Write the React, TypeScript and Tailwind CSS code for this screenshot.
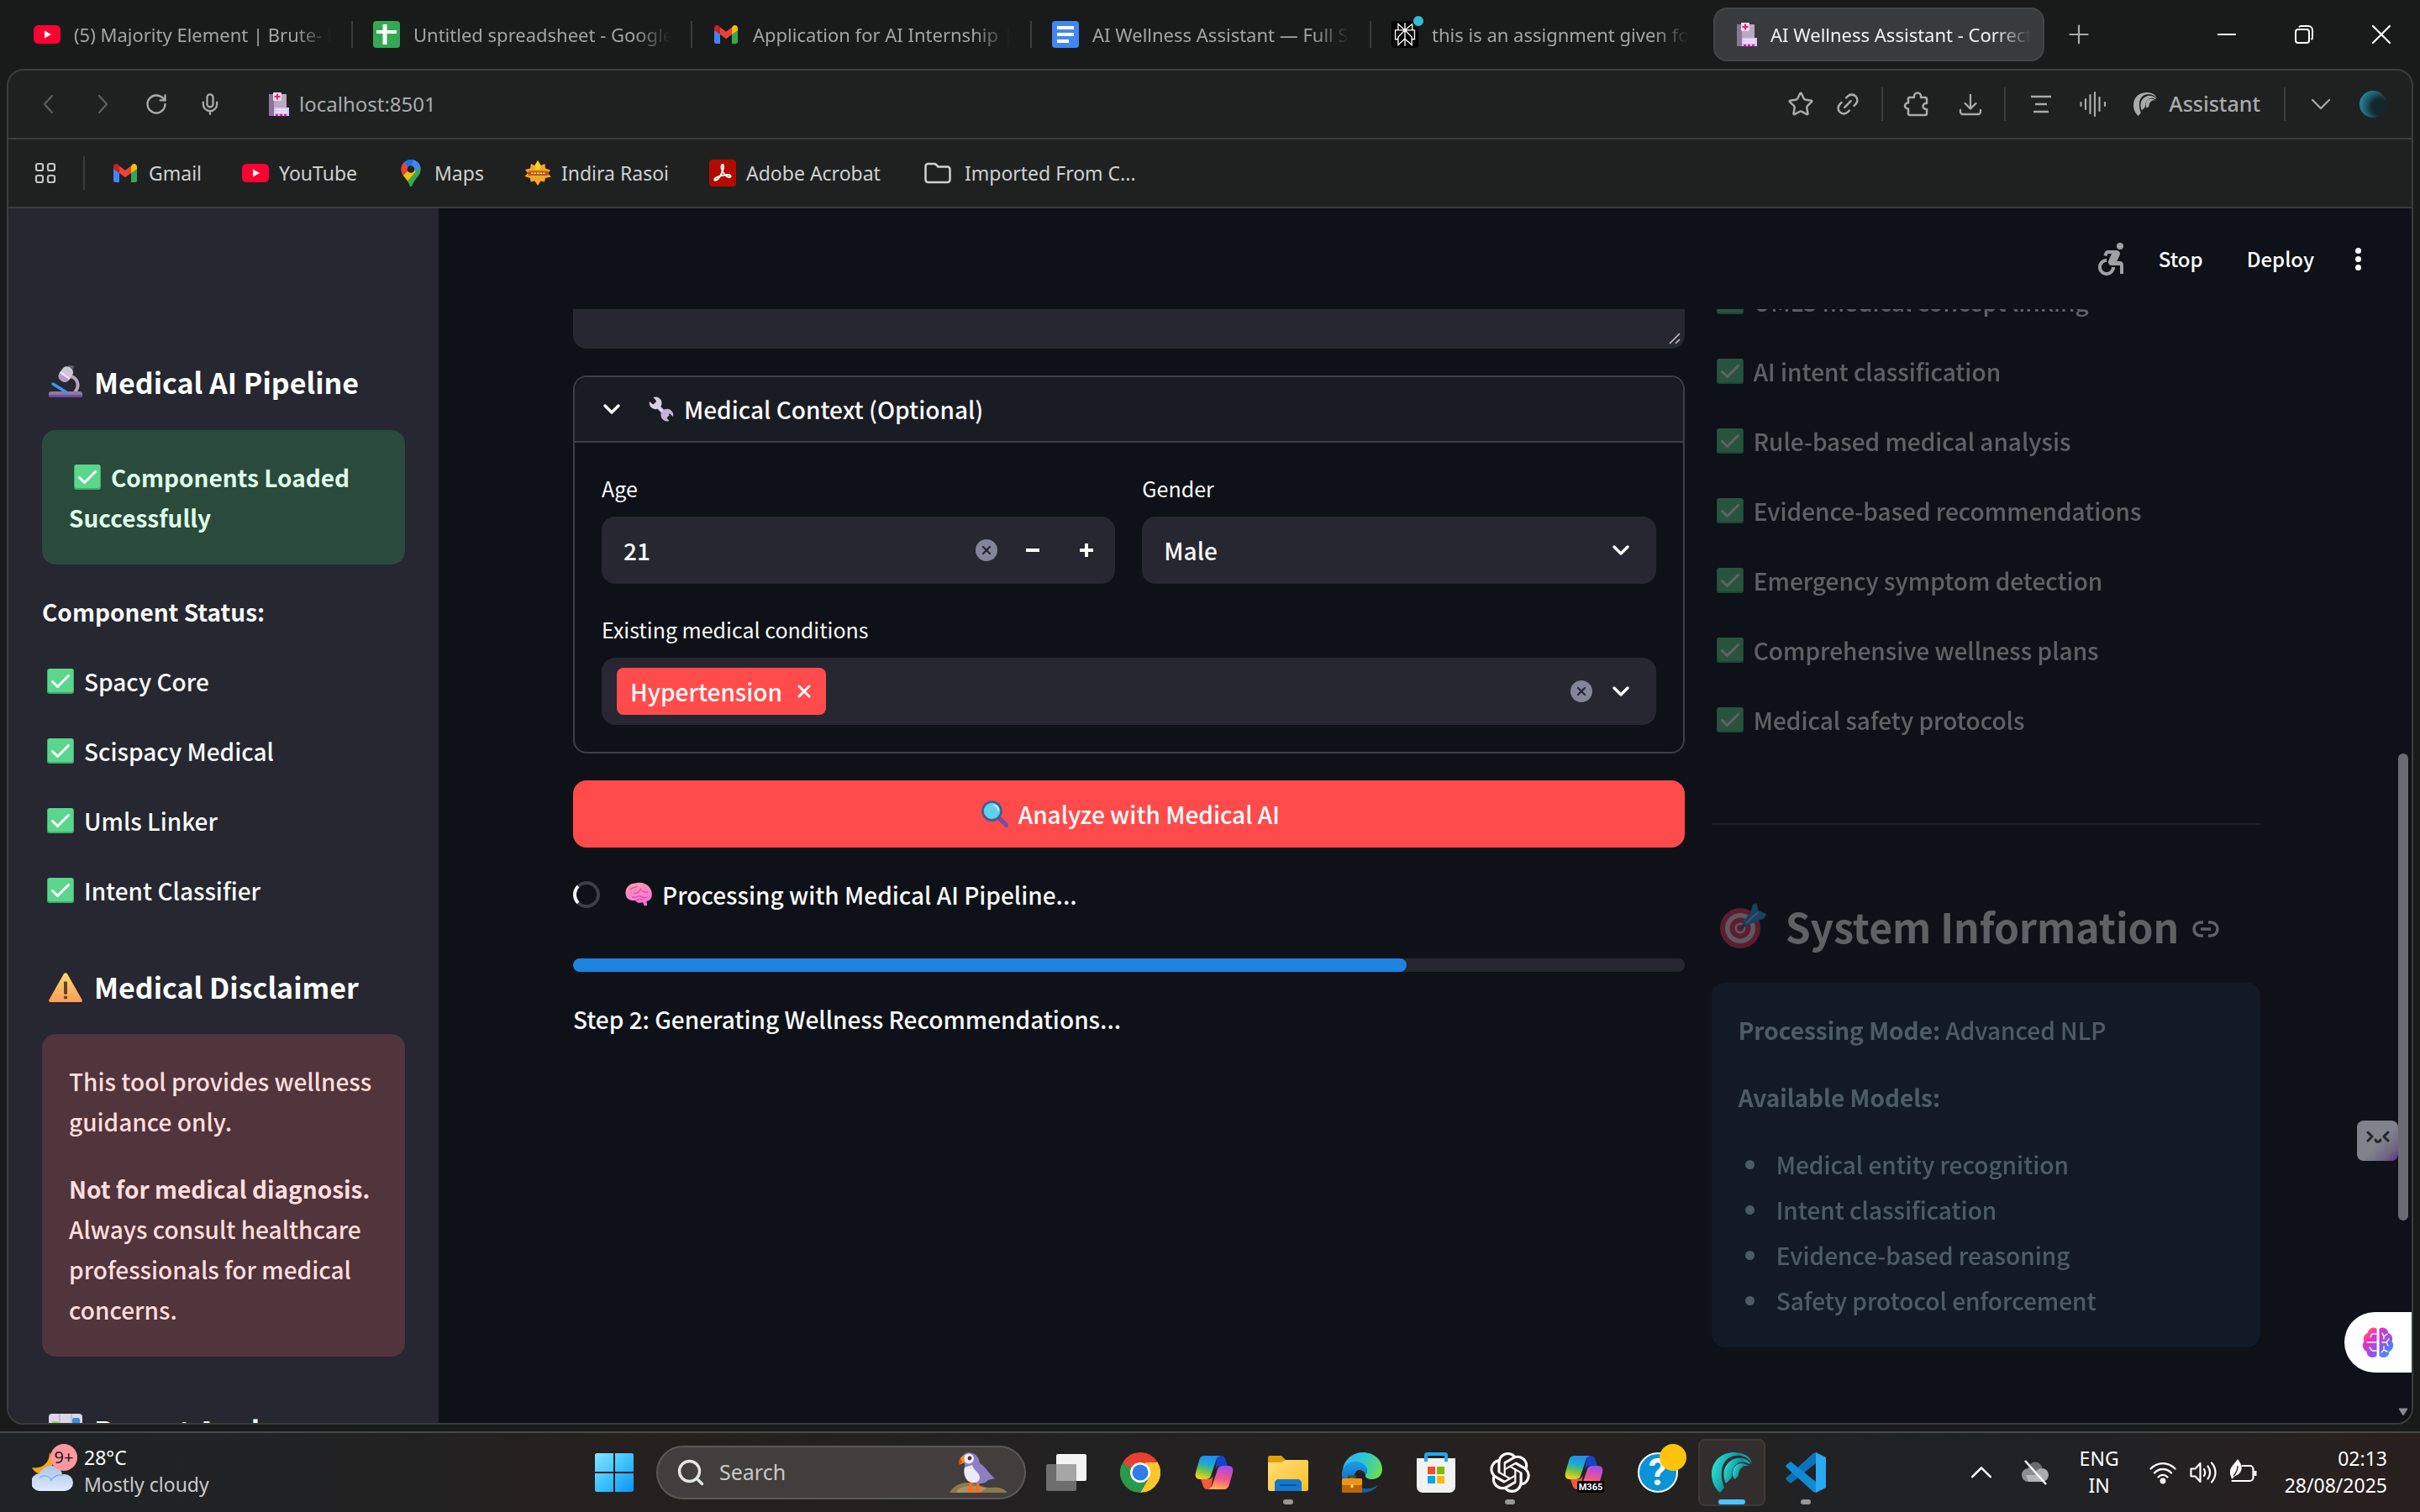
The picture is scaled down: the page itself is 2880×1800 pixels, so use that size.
import React from "react";
import { X, Mic, Star, Link2, RotateCw, Search } from "lucide-react";
import { SiOpenai, SiPerplexity } from "react-icons/si";
import { MdAccessibleForward } from "react-icons/md";

type IconProps = { className?: string };

/* ---------- emoji style drawings ---------- */

const CheckBox = ({ className = "" }: IconProps) => (
  <svg viewBox="0 0 32 32" className={`size-8 shrink-0 ${className}`} aria-hidden="true">
    <rect x="0" y="1" width="32" height="30" rx="3" fill="#3fae70" />
    <rect x="1" y="1" width="30" height="28" rx="2.5" fill="#5ad68d" />
    <path d="M6.5 16.5l6 6L25.500 9.500" fill="none" stroke="#fff" strokeWidth="3" strokeLinecap="round" strokeLinejoin="round" />
  </svg>
);

const Microscope = () => (
  <svg viewBox="0 0 40 40" className="size-10 shrink-0" aria-hidden="true">
    <path d="M25 13c9 1 13 11 6 19" fill="none" stroke="#b5a3bf" strokeWidth="4" />
    <rect x="0" y="31" width="40" height="7" rx="3" fill="#8f7aa3" />
    <rect x="0" y="35" width="40" height="3" rx="1.500" fill="#6f4f94" />
    <path d="M5 22l16 10" stroke="#3a96f2" strokeWidth="3.500" strokeLinecap="round" />
    <g transform="rotate(35 20 11)">
      <rect x="16.500" y="-3" width="7" height="6" rx="2" fill="#5d5866" />
      <rect x="13" y="1" width="14" height="17" rx="6" fill="#cfc8d4" />
      <path d="M13 11h14v3a6 6 0 0 1-6 6h-2a6 6 0 0 1-6-6z" fill="#b29dc4" />
      <rect x="13" y="11" width="14" height="2.500" fill="#f3e4ff" />
    </g>
  </svg>
);

const Warning = () => (
  <svg viewBox="0 0 40 40" className="size-10 shrink-0" aria-hidden="true">
    <defs>
      <linearGradient id="warn" x1="0" y1="0" x2="0" y2="1">
        <stop offset="0" stopColor="#ffd76a" />
        <stop offset="1" stopColor="#ff9d5c" />
      </linearGradient>
    </defs>
    <path d="M17.800 4.500a2.600 2.600 0 0 1 4.400 0L39.500 35c.8 1.500 0 3-1.600 3H2.100C.5 38-.3 36.500.5 35z" fill="url(#warn)" />
    <path d="M18 13.500h4V27a2 2 0 0 1-4 0z" fill="#5c4330" />
    <circle cx="20" cy="32.500" r="2.100" fill="#5c4330" />
  </svg>
);

const ChartEmoji = () => (
  <svg viewBox="0 0 40 40" className="size-10 shrink-0" aria-hidden="true">
    <rect width="40" height="40" rx="4" fill="#ddd6e4" />
    <path d="M13 0v40M27 0v40" stroke="#beb4ca" strokeWidth="1.500" />
    <rect x="4" y="9" width="8" height="27" rx="2" fill="#8ed65b" />
    <rect x="16" y="18" width="8" height="18" rx="2" fill="#f0437c" />
    <rect x="28" y="5" width="9" height="31" rx="2" fill="#2d8fe8" />
  </svg>
);

const Wrench = () => (
  <svg viewBox="0 0 30 30" className="size-[30px] shrink-0" aria-hidden="true">
    <path d="M7 8l16 16" stroke="#c9b5e0" strokeWidth="5" />
    <path d="M8 9l14 14" stroke="#efe4fb" strokeWidth="1.600" />
    <path d="M5.500 1A7.400 7.400 0 1 1 1 6l4 3.500 3.500-1L9 5z" fill="#d7cfe0" />
    <path d="M24.500 29A7.400 7.400 0 1 1 29 24l-4-3.500-3.500 1L21 25z" fill="#c2b2d3" />
  </svg>
);

const Magnifier = () => (
  <svg viewBox="0 0 32 32" className="size-8 shrink-0" aria-hidden="true">
    <path d="M21 21l9 8.500" stroke="#7b4e9c" strokeWidth="5.500" strokeLinecap="round" />
    <circle cx="12.500" cy="12.500" r="11" fill="#5fd0ee" stroke="#3f5d94" strokeWidth="2.600" />
    <path d="M15 5.500c3 .8 5 3 5 6" fill="none" stroke="#c2f3ff" strokeWidth="2" strokeLinecap="round" />
  </svg>
);

const BrainEmoji = () => (
  <svg viewBox="0 0 32 32" className="size-8 shrink-0" aria-hidden="true">
    <defs>
      <linearGradient id="brainPink" x1="0" y1="0" x2=".3" y2="1">
        <stop offset="0" stopColor="#ff9fa8" />
        <stop offset="1" stopColor="#ff6fe0" />
      </linearGradient>
    </defs>
    <path d="M12 2.500C19 0 30 4 31.500 13c1 6-1 10-6 11l.5 5-3 .5-2-4.500c-3 1.500-7 1-9-2C5 24 0 20 .5 13 1 7 6 2.500 12 2.500z" fill="url(#brainPink)" />
    <path d="M6 10c3-3 6-2 8-4M11 14c3 1 6-2 8-5M20 12c3 0 5 2 7 1M9 19c4 1 6-2 9-1s5 3 8 1M14 23c2-2 4-2 6-1" fill="none" stroke="#e052a8" strokeWidth="1.500" strokeLinecap="round" />
  </svg>
);

const Target = () => (
  <svg viewBox="0 0 56 56" className="size-14 shrink-0" aria-hidden="true">
    <circle cx="24" cy="31" r="24" fill="#f0345e" />
    <circle cx="24" cy="31" r="18" fill="#fbe3ea" />
    <circle cx="24" cy="31" r="12.500" fill="#f0345e" />
    <circle cx="24" cy="31" r="6.500" fill="#fbe3ea" />
    <circle cx="24" cy="31" r="4" fill="#f0345e" />
    <path d="M25 31L38 17" stroke="#6c4a8e" strokeWidth="4" strokeLinecap="round" />
    <path d="M28 22l8-9 3-10 4-2 3 9 9 4-2 5-9 4-10 4c-5 2-8-1-6-5z" fill="#2a9df0" />
    <path d="M31 25l14-13" stroke="#8fdcff" strokeWidth="2" />
  </svg>
);

/* ---------- brand marks ---------- */

const YouTube = () => (
  <svg viewBox="0 0 32 32" className="size-8 shrink-0" aria-hidden="true">
    <rect y="5" width="32" height="22" rx="5.500" fill="#ff0033" />
    <path d="M13 11.500v9l8-4.500z" fill="#fff" />
  </svg>
);

const Gmail = () => (
  <svg viewBox="0 0 32 32" className="size-8 shrink-0" aria-hidden="true">
    <path d="M2 9v15.500A2.500 2.500 0 0 0 4.500 27H9V14z" fill="#4285f4" />
    <path d="M30 9v15.500a2.500 2.500 0 0 1-2.500 2.500H23V14z" fill="#34a853" />
    <path d="M23 8v8l7-5V8.500c0-3-3.300-4.600-5.600-2.800z" fill="#fbbc04" />
    <path d="M9 16V7.500l7 5.300 7-5.300V16l-7 5.200z" fill="#ea4335" />
    <path d="M2 8.500V11l7 5V7.500L7.600 5.700C5.300 4 2 5.500 2 8.500z" fill="#c5221f" />
  </svg>
);

const Sheets = () => (
  <svg viewBox="0 0 32 32" className="size-8 shrink-0" aria-hidden="true">
    <rect width="32" height="32" rx="4" fill="#34a853" />
    <path d="M11.500 4h5v24h-5z" fill="#fff" />
    <path d="M4 11h24v4H4z" fill="#fff" />
  </svg>
);

const Docs = () => (
  <svg viewBox="0 0 32 32" className="size-8 shrink-0" aria-hidden="true">
    <rect width="32" height="32" rx="4" fill="#4285f4" />
    <path d="M6 6h20v4H6zM6 14h20v4H6zM6 22h14v4H6z" fill="#fff" />
  </svg>
);

const Hospital = () => (
  <svg viewBox="0 0 24 32" className="h-8 w-6 shrink-0" aria-hidden="true">
    <rect x="0" y="4" width="21" height="26" rx="1" fill="#b9a9c2" />
    <rect x="0" y="4" width="6" height="26" fill="#8a7596" />
    <rect x="5" y="2" width="10" height="10" rx="1" fill="#f5dcf0" />
    <path d="M10 3.500v7M6.500 7h7" stroke="#e0246f" strokeWidth="2" />
    <rect x="6" y="20" width="18" height="10" fill="#d9c3ff" />
    <path d="M8 22.500h14M8 25.500h14" stroke="#f6efff" strokeWidth="1.500" />
    <path d="M8 29h3M13 29h3M18 29h3" stroke="#d420b4" strokeWidth="2.400" />
  </svg>
);

const MapsPin = () => (
  <svg viewBox="0 0 32 32" className="size-8 shrink-0" aria-hidden="true">
    <defs>
      <clipPath id="pin">
        <path d="M16 0a11.500 11.500 0 0 1 11.500 11.500c0 5-3 8-5.700 11.500C19.500 26 18.500 28 17.500 31c-.5 1.300-2.500 1.300-3 0-1-3-2-5-4.300-8C7.500 19.500 4.500 16.500 4.500 11.500A11.500 11.500 0 0 1 16 0z" />
      </clipPath>
    </defs>
    <g clipPath="url(#pin)">
      <rect width="32" height="32" fill="#34a853" />
      <path d="M0 0h32L16 12z" fill="#1a73e8" />
      <path d="M19 0l14 4L18 19 16 8z" fill="#4285f4" />
      <path d="M0 3l9 1 5 7-7 8-7-2z" fill="#ea4335" />
      <path d="M18 8L4 22l6 6L22 15z" fill="#fbbc04" />
      <path d="M22 14l8-8v12L16 32l-4-6z" fill="#34a853" />
    </g>
    <circle cx="16" cy="11.500" r="4.300" fill="#202222" />
  </svg>
);

const Rasoi = () => (
  <svg viewBox="0 0 32 32" className="size-8 shrink-0" aria-hidden="true">
    <path d="M16 1l3.500 6 5-2 .5 5.500 6 2-3 4 4 4-7 1.500-1 4.500-4.500-1L16 31l-3.500-5.500-5 1L7 22l-6.500-2L4 16 1 12l6-1.500L8 5l4.500 2z" fill="#f5a623" />
    <path d="M16 1l3.500 6-1 5h-5l-1-5z" fill="#fbd01e" />
    <rect x="4" y="13.500" width="25" height="5.500" rx="2.500" fill="#b5561c" />
    <path d="M8 16.300h17" stroke="#ffe2a6" strokeWidth="1.500" strokeDasharray="2.500 1" />
  </svg>
);

const Acrobat = () => (
  <svg viewBox="0 0 32 32" className="size-8 shrink-0" aria-hidden="true">
    <rect width="32" height="32" rx="4" fill="#b30b00" />
    <path d="M6.500 24.500c-1.300-2 4-4.500 8.500-5.500s10-1.300 10.500.8-4 1.400-7-2-5-8.500-3.600-11 3 .5 1.600 5-5.500 14-10 12.700z" fill="none" stroke="#fff" strokeWidth="2" strokeLinejoin="round" />
  </svg>
);

const FolderOutline = () => (
  <svg viewBox="0 0 32 32" className="mr-1 ml-1 size-8 shrink-0" fill="none" stroke="#d0d2d2" strokeWidth="2.500" strokeLinejoin="round" aria-hidden="true">
    <path d="M1.500 8a3 3 0 0 1 3-3h7c1 0 1.800.3 2.500 1l2.500 2.500h11a3 3 0 0 1 3 3V24a3 3 0 0 1-3 3h-23a3 3 0 0 1-3-3z" />
  </svg>
);

const CometMark = ({ className = "", teal = false }: IconProps & { teal?: boolean }) => (
  <svg viewBox="0 0 48 48" className={`shrink-0 ${className}`} fill={teal ? "url(#cometTeal)" : "currentColor"} aria-hidden="true">
    {teal && (
      <defs>
        <linearGradient id="cometTeal" x1="0" y1=".3" x2="1" y2=".7">
          <stop offset="0" stopColor="#2be3d6" />
          <stop offset=".5" stopColor="#0e8f9d" />
          <stop offset="1" stopColor="#22c3d4" />
        </linearGradient>
      </defs>
    )}
    <path d="M0 26C0 10 12 0 27 0c11 0 19 5 21 13-5-8-13-10-20-9C13 6 8 22 15 42l-5 6C3 42 0 34 0 26z" />
    <path d="M17 37C11 24 16 10 30 7c7-1 13 1 16 6l-1 1c-8-5-16-2-19 5-3 6-1 9-3 12z" />
    <path d="M25 27c-1-9 5-15 13-14l7 3c-6-1-10 2-12 6-1 3-1 5-2 7l-4 3z" />
  </svg>
);

const WindowsLogo = () => (
  <svg viewBox="0 0 46 46" className="size-[46px]" aria-hidden="true">
    <defs>
      <linearGradient id="win" x1="0" y1="0" x2="1" y2="1">
        <stop offset="0" stopColor="#8be3ff" />
        <stop offset=".5" stopColor="#3cc3ff" />
        <stop offset="1" stopColor="#0a94f5" />
      </linearGradient>
    </defs>
    <path d="M1.500 0H22v22H0V1.500zM24 0h20.500L46 1.500V22H24zM0 24h22v22H1.500L0 44.500zM24 24h22v20.500L44.500 46H24z" fill="url(#win)" />
  </svg>
);

const Puffin = () => (
  <svg viewBox="0 0 68 48" className="h-12 w-[68px]" aria-hidden="true">
    <path d="M0 48c4-6 10-12 22-12 10 0 16 5 24 6 8 0 16-2 22 5v1z" fill="#8d7a4a" />
    <path d="M10 44c10-6 24-4 34-1l-8 5H8z" fill="#a89463" />
    <path d="M14 7c2-6 8-8 13-6 5 1 8 6 9 12 8 5 12 14 18 18l-8 2c-4 5-12 5-18 3-8-3-12-10-10-18 1-4-1-6-4-11z" fill="#8d7fc4" />
    <path d="M18 18c-2 8 1 16 8 18 6 1 10-2 10-6 0-6-7-8-9-15z" fill="#eceaf5" />
    <circle cx="23" cy="7.500" r="6" fill="#f1effa" />
    <circle cx="24" cy="7" r="2.400" fill="#5b2f2f" />
    <path d="M17 4c-4 1-6 5-6 10 3 1 6-1 7-4z" fill="#ff8a1f" />
    <path d="M13 7c-2 2-2 5-2 7 2 0 3-1 4-2z" fill="#d9480f" />
    <path d="M26 36l-3 9h6M34 37l-2 9h5" fill="none" stroke="#ff6a1f" strokeWidth="3.500" />
  </svg>
);

const TaskView = () => (
  <svg viewBox="0 0 48 48" className="size-12" aria-hidden="true">
    <rect x="12" y="2" width="36" height="32" rx="2" fill="#f4f4f4" />
    <rect x="0" y="14" width="36" height="32" rx="2" fill="#6e6e6e" />
    <rect x="12" y="14" width="24" height="20" fill="#a6a6a6" />
  </svg>
);

const Chrome = () => (
  <svg viewBox="0 0 48 48" className="size-12" aria-hidden="true">
    <path d="M24 24L3.200 12A24 24 0 0 1 44.800 12z" fill="#e8402f" />
    <path d="M24 12h20.800A24 24 0 0 1 24 48l10.400-18z" fill="#fdc62e" />
    <path d="M34.400 30L24 48A24 24 0 0 1 3.200 12l10.400 18z" fill="#2a9a48" />
    <path d="M3.200 12H30v12H13.600z" fill="#e8402f" />
    <path d="M3.200 12l10.400 18 8-4z" fill="#2a9a48" />
    <circle cx="24" cy="24" r="12" fill="#fff" />
    <circle cx="24" cy="24" r="9.500" fill="#2f7de9" />
  </svg>
);

const Copilot = ({ id, badge = false }: { id: string; badge?: boolean }) => (
  <svg viewBox="0 0 48 48" className="size-12" aria-hidden="true">
    <defs>
      <linearGradient id={`${id}a`} x1=".6" y1="0" x2=".3" y2="1">
        <stop offset="0" stopColor="#1f8df2" />
        <stop offset=".35" stopColor="#1ba7d8" />
        <stop offset=".65" stopColor="#6cc24a" />
        <stop offset="1" stopColor="#fcd116" />
      </linearGradient>
      <linearGradient id={`${id}b`} x1=".4" y1="1" x2=".6" y2="0">
        <stop offset="0" stopColor="#ffb14a" />
        <stop offset=".45" stopColor="#f4558b" />
        <stop offset="1" stopColor="#a14bf0" />
      </linearGradient>
    </defs>
    <path d="M28 4h4c4 0 5 3 6 6l2 6h-8c-4 0-6 2-7 6z" fill="#1246c8" />
    <path d="M20 44h-4c-4 0-5-3-6-6l-2-6h8c4 0 6-2 7-6z" fill="#f5573f" />
    <path d="M13 4h18c-3 1-4 3-5 6l-6 18c-1 3-3 4-6 4H7c-5 0-6-4-5-8l4-14c1-4 3-6 7-6z" fill={`url(#${id}a)`} />
    <path d="M35 44H17c3-1 4-3 5-6l6-18c1-3 3-4 6-4h7c5 0 6 4 5 8l-4 14c-1 4-3 6-7 6z" fill={`url(#${id}b)`} />
    {badge && (
      <>
        <rect x="16" y="34" width="32" height="14" rx="2" fill="#000" />
        <text x="32" y="45" textAnchor="middle" fontSize="11" fontWeight="700" fontFamily="Roboto, sans-serif" fill="#fff">M365</text>
      </>
    )}
  </svg>
);

const Explorer = () => (
  <svg viewBox="0 0 48 48" className="size-12" aria-hidden="true">
    <defs>
      <linearGradient id="fold" x1="0" y1="0" x2="1" y2="1">
        <stop offset="0" stopColor="#ffe07a" />
        <stop offset="1" stopColor="#fbbd24" />
      </linearGradient>
    </defs>
    <path d="M0 6a2 2 0 0 1 2-2h14l5 5h-2v6H0z" fill="#e0a106" />
    <path d="M0 12h16l4-3h26a2 2 0 0 1 2 2v33a2 2 0 0 1-2 2H2a2 2 0 0 1-2-2z" fill="url(#fold)" />
    <path d="M8 46V37c0-3 2-5 5-5h22c3 0 5 2 5 5v9z" fill="#1478d0" />
    <path d="M15 39h18" stroke="#0b5296" strokeWidth="2" strokeLinecap="round" />
  </svg>
);

const Edge = () => (
  <svg viewBox="0 0 48 48" className="size-12" aria-hidden="true">
    <defs>
      <linearGradient id="edgeTop" x1="0" y1=".3" x2="1" y2=".6">
        <stop offset="0" stopColor="#2fb5ee" />
        <stop offset=".5" stopColor="#2cc7cf" />
        <stop offset="1" stopColor="#6ae04f" />
      </linearGradient>
      <linearGradient id="edgeLow" x1="0" y1="0" x2="0" y2="1">
        <stop offset="0" stopColor="#1c9bea" />
        <stop offset="1" stopColor="#0c59a4" />
      </linearGradient>
    </defs>
    <path d="M1 20C3 8 13 0 25 0c13 0 23 9 23 20 0 7-5 12-12 12-5 0-8-2-8-4s2-2 2-6c0-5-5-9-12-9-8 0-14 5-17 12z" fill="url(#edgeTop)" />
    <path d="M0 24c1-8 8-13 16-13 9 0 14 5 14 11 0 4-2 5-2 5s-2-7-8-6c-6 2-7 10-3 16 5 7 14 9 26 2-4 6-11 9-18 9C9 48-1 37 0 24z" fill="url(#edgeLow)" />
    <rect x="0" y="31" width="24" height="17" rx="1.500" fill="#b86808" />
    <rect x="0" y="31" width="24" height="8" rx="1.500" fill="#ef9418" />
    <rect x="10.500" y="38" width="3" height="4" fill="#ffdf4f" />
    <path d="M8 31v-2.500h8V31" fill="none" stroke="#6b3d05" strokeWidth="2" />
  </svg>
);

const Store = () => (
  <svg viewBox="0 0 48 48" className="size-12" aria-hidden="true">
    <path d="M1 7h46v34a7 7 0 0 1-7 7H8a7 7 0 0 1-7-7z" fill="#f2f2f2" />
    <path d="M12 11V3.500C12 2.500 12.500 2 13.500 2h21c1 0 1.500.5 1.500 1.500V11" fill="none" stroke="#1fa9f0" strokeWidth="4" />
    <path d="M14 17h9v9h-9z" fill="#f25022" />
    <path d="M25 17h9v9h-9z" fill="#7fba00" />
    <path d="M14 28h9v9h-9z" fill="#00a4ef" />
    <path d="M25 28h9v9h-9z" fill="#ffb900" />
  </svg>
);

const Help = () => (
  <span className="relative flex size-12 items-center justify-center rounded-full border-2 border-white bg-[#0a93d8]">
    <span className="font-['Roboto',sans-serif] text-[44px] leading-none font-bold text-white">?</span>
    <span className="absolute -top-3 -right-3 size-8 rounded-full bg-[#ffc20e]" />
  </span>
);

const VsCode = () => (
  <svg viewBox="0 0 48 48" className="size-12" aria-hidden="true">
    <path d="M36 0l12 6v36l-12 6z" fill="#2aa9f2" />
    <path d="M36 13L6 37l-5-4c-1-1-1-2 0-3L33 1l3-1z" fill="#0a72b8" />
    <path d="M36 35L6 11l-5 4c-1 1-1 2 0 3l32 29 3 1z" fill="#0f8ad6" />
  </svg>
);

const MoonCloud = () => (
  <svg viewBox="0 0 54 56" className="h-14 w-[54px]" aria-hidden="true">
    <defs>
      <linearGradient id="cloud" x1="0" y1="0" x2="0" y2="1">
        <stop offset="0" stopColor="#a9c6ee" />
        <stop offset="1" stopColor="#dfeafc" />
      </linearGradient>
    </defs>
    <path d="M21 10c6 8 5 20-5 25C10 38 3 34 0 28c11 2 21-4 21-18z" fill="#f3a51c" />
    <path d="M10 56A10.500 10.500 0 0 1 9 35c3-6 9-9 14-9 7 0 12 4 13 10h3a10 10 0 0 1 0 20z" fill="url(#cloud)" />
    <path d="M9 40c5-4 12-2 14 3 3-5 9-7 14-6" fill="none" stroke="#86aee6" strokeWidth="1.500" />
  </svg>
);

const PillBrain = () => (
  <svg viewBox="0 0 38 38" className="size-[38px]" aria-hidden="true">
    <defs>
      <linearGradient id="pillBrain" x1="0" y1="0" x2="1" y2="1">
        <stop offset="0" stopColor="#ff8a2a" />
        <stop offset=".3" stopColor="#f02cc0" />
        <stop offset=".65" stopColor="#7d5cf5" />
        <stop offset="1" stopColor="#1fb4ff" />
      </linearGradient>
    </defs>
    <path d="M17.500 3v32c-4 4-12 2-12-5-5-2-6-9-3-12-2-5 1-9 4-10 1-7 9-8 11-5zM20.500 3v32c4 4 12 2 12-5 5-2 6-9 3-12 2-5-1-9-4-10-1-7-9-8-11-5z" fill="url(#pillBrain)" />
    <path d="M17 9h-5l-2 4M17 19H6M17 29h-5l-3-4M24 8l2 4 4-3M26 12v3M24 19h5l3-4M29 19l2 4M23 31l3-3 4 2M26 28v-4" fill="none" stroke="#fff" strokeWidth="1.400" strokeLinecap="round" />
  </svg>
);

/* ---------- browser chrome ---------- */

const tabs: { icon: React.ReactNode; title: string }[] = [
  { icon: <YouTube />, title: "(5) Majority Element | Brute- F" },
  { icon: <Sheets />, title: "Untitled spreadsheet - Google" },
  { icon: <Gmail />, title: "Application for AI Internship |" },
  { icon: <Docs />, title: "AI Wellness Assistant — Full S" },
  {
    icon: (
      <span className="relative flex size-8 shrink-0 items-center justify-center rounded bg-black text-white">
        <SiPerplexity className="size-7" />
        <span className="absolute -top-2 -right-2 size-4 rounded-full border-2 border-[#191b1a] bg-[#33bcd0]" />
      </span>
    ),
    title: "this is an assignment given for",
  },
];

const fade = "[mask-image:linear-gradient(to_right,black_86%,transparent)]";

const Line = ({ d, className = "size-7" }: { d: string; className?: string }) => (
  <svg viewBox="0 0 28 28" className={className} fill="none" stroke="currentColor" strokeWidth="2.200" strokeLinecap="round" strokeLinejoin="round" aria-hidden="true"><path d={d} /></svg>
);

function TabStrip() {
  return (
    <header className="flex h-[82px] items-center pr-8 pl-4">
      <nav className="flex min-w-0 items-center" aria-label="Open tabs">
        {tabs.map((t) => (
          <a key={t.title} href="#" className="flex h-8 w-[404px] min-w-0 items-center gap-4 border-r-2 border-[#3a3d3d] px-6 text-[22px] text-[#a3a5a5] [&:nth-child(5)]:border-transparent">
            {t.icon}
            <span className={`flex-1 overflow-hidden whitespace-nowrap leading-8 ${fade}`}>{t.title}</span>
          </a>
        ))}
        <a href="#" aria-current="page" className="ml-[3px] flex h-16 w-[394px] items-center gap-4 rounded-2xl border-2 border-[#434647] bg-[#383b3c] pr-3.5 pl-[26px] text-[22px] text-[#f1f2f2]">
          <Hospital />
          <span className={`flex-1 overflow-hidden whitespace-nowrap ${fade}`}>AI Wellness Assistant - Correct</span>
        </a>
      </nav>
      <button aria-label="New tab" className="ml-[27px] text-[#a9abab]"><Line d="M14 3.500v21M3.500 14h21" /></button>
      <div className="ml-auto flex items-center gap-16 text-white">
        <button aria-label="Minimise"><Line d="M4 14h20" /></button>
        <button aria-label="Restore">
          <svg viewBox="0 0 28 28" className="size-7" fill="none" stroke="currentColor" strokeWidth="2" aria-hidden="true">
            <rect x="4" y="8" width="16" height="16" rx="3" />
            <path d="M8 5.500c.5-1 1.500-1.500 2.500-1.500H19a5 5 0 0 1 5 5v8.500c0 1-.5 2-1.500 2.500" />
          </svg>
        </button>
        <button aria-label="Close"><Line d="M4 4l20 20M24 4L4 24" /></button>
      </div>
    </header>
  );
}

const Rule = ({ className }: { className: string }) => <span className={`h-10 w-0.5 shrink-0 bg-[#3a3d3d] ${className}`} />;

function Toolbar() {
  return (
    <div className="flex h-[82px] items-center border-b-2 border-[#3a3d3d] pr-[30px] pl-[34px] text-[#a9abab]">
      <div className="flex items-center gap-9">
        <button aria-label="Back" className="text-[#5d6060]"><Line d="M18 4L9 14l9 10" /></button>
        <button aria-label="Forward" className="text-[#5d6060]"><Line d="M10 4l9 10-9 10" /></button>
        <button aria-label="Reload"><RotateCw className="size-7" strokeWidth={2} /></button>
        <button aria-label="Voice"><Mic className="size-7" strokeWidth={2} /></button>
      </div>
      <label className="ml-14 flex flex-1 items-center gap-3">
        <Hospital />
        <input aria-label="Address" defaultValue="localhost:8501" className="w-full bg-transparent text-2xl outline-none" />
      </label>
      <div className="flex items-center">
        <div className="flex items-center gap-6">
          <button aria-label="Bookmark"><Star className="size-8" strokeWidth={1.900} /></button>
          <button aria-label="Copy link"><Link2 className="size-8 -rotate-45" strokeWidth={1.900} /></button>
        </div>
        <Rule className="mx-6" />
        <div className="flex items-center gap-8">
          <button aria-label="Extensions">
            <svg viewBox="0 0 32 32" className="size-8" fill="none" stroke="currentColor" strokeWidth="2.500" strokeLinejoin="round"><path d="M7 8h6V6.500a4 4 0 0 1 8 0V8h5a2 2 0 0 1 2 2v5h-1a3.500 3.500 0 0 0 0 7h1v5a2 2 0 0 1-2 2H8a2 2 0 0 1-2-2v-5.500H5.500a3.500 3.500 0 0 1 0-7H6V9z" /></svg>
          </button>
          <button aria-label="Downloads">
            <svg viewBox="0 0 32 32" className="size-8" fill="none" stroke="currentColor" strokeWidth="2.300" strokeLinecap="round" strokeLinejoin="round"><path d="M16 5v16M9.500 15l6.500 6.500 6.500-6.500M4 23v2a3 3 0 0 0 3 3h18a3 3 0 0 0 3-3v-2" /></svg>
          </button>
        </div>
        <Rule className="mx-6" />
        <div className="flex items-center gap-8 pl-1">
          <button aria-label="Summarise">
            <svg viewBox="0 0 28 28" className="size-7" fill="none" stroke="currentColor" strokeWidth="2.400"><path d="M2 5h24M7 14h14M5 23h18" /></svg>
          </button>
          <button aria-label="Voice mode">
            <svg viewBox="0 0 32 32" className="size-8" fill="none" stroke="currentColor" strokeWidth="2.200" strokeLinecap="round"><path d="M1.500 14v4M7 10v12M12.500 5v22M18 2v28M23.500 8v16M30 14v4" /></svg>
          </button>
          <button className="flex items-center gap-3.5 text-[25px] font-medium"><CometMark className="size-7" />Assistant</button>
        </div>
        <Rule className="mx-7" />
        <div className="flex items-center gap-8">
          <button aria-label="More"><Line d="M4 9l10 10L24 9" /></button>
          <button aria-label="Profile" className="size-8 rounded-full bg-[radial-gradient(circle_at_75%_60%,#14262c_30%,#1e5d6c_55%,#2fa9bd)]" />
        </div>
      </div>
    </div>
  );
}

const bookmarks: { icon: React.ReactNode; label: string }[] = [
  { icon: <Gmail />, label: "Gmail" },
  { icon: <YouTube />, label: "YouTube" },
  { icon: <MapsPin />, label: "Maps" },
  { icon: <Rasoi />, label: "Indira Rasoi" },
  { icon: <Acrobat />, label: "Adobe Acrobat" },
  { icon: <FolderOutline />, label: "Imported From C..." },
];

function Bookmarks() {
  return (
    <nav className="flex h-[82px] items-center border-b-2 border-[#3a3d3d] pl-[31px] text-[23px] text-[#cfd1d1]" aria-label="Bookmarks">
      <button aria-label="All bookmarks">
        <svg viewBox="0 0 26 26" className="size-[26px]" fill="none" stroke="#c4c6c6" strokeWidth="2.200"><rect x="2" y="2" width="8" height="8" rx="2" /><rect x="16" y="2" width="8" height="8" rx="2" /><rect x="2" y="16" width="8" height="8" rx="2" /><rect x="16" y="16" width="8" height="8" rx="2" /></svg>
      </button>
      <Rule className="mx-8" />
      <div className="flex items-center gap-12">
        {bookmarks.map((b) => (
          <a key={b.label} href="#" className="flex items-center gap-3 whitespace-nowrap">{b.icon}{b.label}</a>
        ))}
      </div>
    </nav>
  );
}

/* ---------- app ---------- */

const SideHeading = ({ icon, children }: { icon: React.ReactNode; children: React.ReactNode }) => (
  <h2 className="flex h-12 items-center gap-3.5 pl-2 text-[34px] leading-[48px] font-bold whitespace-nowrap text-white">{icon}{children}</h2>
);

function Sidebar() {
  return (
    <aside className="w-[512px] shrink-0 overflow-hidden bg-[#262730] px-10 pt-[183px] text-[28px] leading-[48px] font-medium text-[#fafafa]">
      <SideHeading icon={<Microscope />}>Medical AI Pipeline</SideHeading>
      <div className="mt-[33px] rounded-2xl bg-[#2a4a3b] p-8 font-bold text-[#dffde9]">
        <CheckBox className="mr-3 ml-1.5 inline-block align-[-4px]" />Components Loaded Successfully
      </div>
      <div className="mt-8 flex flex-col gap-[35px]">
        <p className="font-bold">Component Status:</p>
        {["Spacy Core", "Scispacy Medical", "Umls Linker", "Intent Classifier"].map((s) => (
          <p key={s} className="flex items-center gap-3 pl-1.5"><CheckBox />{s}</p>
        ))}
      </div>
      <div className="mt-[67px]"><SideHeading icon={<Warning />}>Medical Disclaimer</SideHeading></div>
      <div className="mt-8 rounded-2xl bg-[#51343c] p-8 text-[#ffdede]">
        <p>This tool provides wellness guidance only.</p>
        <p className="mt-8"><strong className="font-bold">Not for medical diagnosis.</strong> Always consult healthcare professionals for medical concerns.</p>
      </div>
      <div className="mt-16"><SideHeading icon={<ChartEmoji />}>Recent Analyses</SideHeading></div>
    </aside>
  );
}

const Chevron = ({ className = "" }: IconProps) => (
  <svg viewBox="0 0 24 24" className={`size-6 ${className}`} fill="none" stroke="#fafafa" strokeWidth="3.500" strokeLinecap="round" strokeLinejoin="round" aria-hidden="true"><path d="M4 8l8 8 8-8" /></svg>
);

const Clear = ({ label }: { label: string }) => (
  <button aria-label={label} className="flex size-[26px] items-center justify-center rounded-full bg-[#83869a] text-[#262730]"><X className="size-4" strokeWidth={3.500} /></button>
);

function ContextForm() {
  return (
    <section className="mt-8 rounded-2xl border-2 border-[#3c3f45]">
      <button className="flex h-[76px] w-full items-center rounded-t-2xl bg-[#1a1c23] pl-8" aria-expanded="true">
        <Chevron />
        <span className="ml-8 flex items-center gap-3"><Wrench />Medical Context (Optional)</span>
      </button>
      <div className="border-t-2 border-[#3c3f45] px-8 pt-[34px] pb-8">
        <div className="grid grid-cols-2 gap-8">
          <div>
            <label htmlFor="age" className="block text-[25px] leading-10 font-normal">Age</label>
            <div className="mt-3.5 flex h-20 items-center rounded-2xl bg-[#262730] px-6">
              <input id="age" defaultValue="21" inputMode="numeric" className="min-w-0 flex-1 bg-transparent pl-0.5 outline-none" />
              <Clear label="Clear age" />
              <button aria-label="Decrease" className="ml-8 flex size-5 items-center justify-center"><span className="h-1 w-4 bg-white" /></button>
              <button aria-label="Increase" className="ml-11 grid size-5 place-items-center *:col-start-1 *:row-start-1"><span className="h-1 w-4 bg-white" /><span className="h-4 w-1 bg-white" /></button>
            </div>
          </div>
          <div>
            <label htmlFor="gender" className="block text-[25px] leading-10 font-normal">Gender</label>
            <div className="relative mt-3.5">
              <select id="gender" className="h-20 w-full appearance-none rounded-2xl bg-[#262730] pl-[26px] outline-none"><option>Male</option><option>Female</option></select>
              <Chevron className="pointer-events-none absolute top-7 right-[30px]" />
            </div>
          </div>
        </div>
        <label htmlFor="conditions" className="mt-[34px] block text-[25px] leading-10 font-normal">Existing medical conditions</label>
        <div className="mt-3.5 flex h-20 items-center rounded-2xl bg-[#262730] pr-[30px] pl-[18px]">
          <span className="flex h-14 items-center rounded-lg bg-[#ff4b4b] pr-3.5 pl-4">Hypertension
            <button aria-label="Remove Hypertension" className="ml-3.5"><X className="size-6" strokeWidth={3} /></button>
          </span>
          <input id="conditions" className="min-w-0 flex-1 bg-transparent outline-none" />
          <Clear label="Clear conditions" />
          <button aria-label="Show options" className="ml-[22px]"><Chevron /></button>
        </div>
      </div>
    </section>
  );
}

function MainColumn() {
  const progress = 75;
  return (
    <div className="w-[calc(66.667%-16px)] shrink-0">
      <div className="relative">
        <textarea aria-label="Describe your symptoms" className="block h-[47px] w-full resize-none rounded-b-2xl bg-[#262730] outline-none" />
        <svg viewBox="0 0 16 16" className="absolute right-1 bottom-1 size-4" stroke="#c8c8c8" strokeWidth="1.500" aria-hidden="true"><path d="M2 14L14 2M9 14l5-5" /></svg>
      </div>
      <ContextForm />
      <button className="mt-8 flex h-20 w-full items-center justify-center gap-3 rounded-2xl bg-[#ff4b4b] pl-1 text-white"><Magnifier />Analyze with Medical AI</button>
      <p className="mt-8 flex items-center">
        <span className="size-8 rounded-full border-4 border-[#3c3f45] border-l-[#fafafa]" />
        <span className="ml-[30px] flex items-center gap-3"><BrainEmoji />Processing with Medical AI Pipeline...</span>
      </p>
      <div className="mt-[52px] h-4 rounded-lg bg-[#262730]" role="progressbar" aria-valuenow={progress}>
        <div className="h-4 rounded-lg bg-[#1c83e1]" style={{ width: `${progress}%` }} />
      </div>
      <p className="mt-8">Step 2: Generating Wellness Recommendations...</p>
    </div>
  );
}

const features = ["UMLS medical concept linking", "AI intent classification", "Rule-based medical analysis", "Evidence-based recommendations", "Emergency symptom detection", "Comprehensive wellness plans", "Medical safety protocols"];
const models = ["Medical entity recognition", "Intent classification", "Evidence-based reasoning", "Safety protocol enforcement"];

function InfoColumn() {
  return (
    <div className="min-w-0 flex-1 opacity-[0.34]">
      <div className="-mt-[33px] flex flex-col gap-[35px]">
        {features.map((f) => (
          <p key={f} className="flex items-center gap-3 pl-1.5"><CheckBox />{f}</p>
        ))}
      </div>
      <hr className="mt-[99px] border-t-2 border-[#3c3f45]" />
      <h2 className="mt-[88px] flex h-16 items-center pl-2.5 text-5xl leading-[64px] font-bold whitespace-nowrap">
        <Target /><span className="ml-[22px]">System Information</span>
        <a href="#" aria-label="Link to section" className="mt-2 ml-4">
          <svg viewBox="0 0 32 20" className="h-5 w-8" fill="none" stroke="currentColor" strokeWidth="3.500"><path d="M13 2H10a8 8 0 0 0 0 16h3M19 2h3a8 8 0 0 1 0 16h-3M10 10h12" /></svg>
        </a>
      </h2>
      <div className="mt-9 rounded-2xl bg-[#172d43] p-8 text-[#c7ebff]">
        <p><strong className="font-bold">Processing Mode:</strong> Advanced NLP</p>
        <p className="mt-8 font-bold">Available Models:</p>
        <ul className="mt-8 flex flex-col gap-1.5">
          {models.map((m) => (
            <li key={m} className="flex items-center gap-[26px] pl-2"><span className="size-[11px] rounded-full bg-current" />{m}</li>
          ))}
        </ul>
      </div>
    </div>
  );
}

function AppMain() {
  return (
    <main className="relative flex min-w-0 flex-1 flex-col overflow-hidden bg-[#0e1117] text-[28px] leading-[48px] font-medium text-[#fafafa]">
      <div className="flex h-[120px] shrink-0 items-center justify-end pr-[52px] text-2xl text-white">
        <MdAccessibleForward className="size-12 text-[#a0a1a4]" />
        <button className="ml-8">Stop</button>
        <button className="ml-[52px]">Deploy</button>
        <button aria-label="Menu" className="ml-10 flex w-6 flex-col items-center gap-[3px]"><span className="size-[7px] rounded-full bg-white" /><span className="size-[7px] rounded-full bg-white" /><span className="size-[7px] rounded-full bg-white" /></button>
      </div>
      <div className="flex min-h-0 flex-1 gap-8 overflow-hidden pr-[180px] pl-40">
        <MainColumn />
        <InfoColumn />
      </div>
      <div className="absolute top-[649px] right-1 h-[556px] w-3 rounded-full bg-[#6b6c70]" />
      <svg viewBox="0 0 12 10" className="absolute right-1 bottom-2 h-2.5 w-3" aria-hidden="true"><path d="M1 1h10L6 9z" fill="#8b8c90" stroke="#8b8c90" strokeLinejoin="round" /></svg>
      <button aria-label="Helper" className="absolute right-4 bottom-[312px] flex h-12 w-[49px] justify-center rounded-lg bg-[linear-gradient(135deg,#80828c_55%,#6e6680_80%,#5a2f8c)] pt-3">
        <svg viewBox="0 0 30 16" className="h-4 w-[30px]" fill="none" stroke="#23252d" strokeWidth="3" strokeLinecap="round" strokeLinejoin="round"><path d="M3 2l5 5-5 5M27 2l-5 5 5 5M12 11c1 3 5 3 6 0" /></svg>
      </button>
      <button aria-label="Assistant panel" className="absolute right-0 bottom-[60px] flex h-[72px] w-20 items-center rounded-l-full bg-white pl-[21px]"><PillBrain /></button>
    </main>
  );
}

/* ---------- taskbar ---------- */

const apps: { name: string; icon: React.ReactNode; state?: "open" | "active" }[] = [
  { name: "Task view", icon: <TaskView /> },
  { name: "Chrome", icon: <Chrome /> },
  { name: "Copilot", icon: <Copilot id="cp" /> },
  { name: "File Explorer", icon: <Explorer />, state: "open" },
  { name: "Edge", icon: <Edge /> },
  { name: "Store", icon: <Store /> },
  { name: "ChatGPT", icon: <SiOpenai className="size-12 text-white" />, state: "open" },
  { name: "Microsoft 365", icon: <Copilot id="m365" badge /> },
  { name: "Get Help", icon: <Help /> },
  { name: "Comet", icon: <CometMark className="size-12" teal />, state: "active" },
  { name: "VS Code", icon: <VsCode />, state: "open" },
];

function Taskbar() {
  return (
    <footer className="grid h-24 shrink-0 grid-cols-[1fr_auto_1fr] items-center border-t-2 border-[#46484a] bg-[linear-gradient(to_right,#1f2325,#222223_15%,#25201e_27%,#222122_45%,#26211f_65%,#1e2225_80%,#242122_92%,#29201d)] text-[23px] text-white">
      <button className="flex items-center gap-2 pb-3 pl-[38px] text-left">
        <span className="relative">
          <MoonCloud />
          <span className="absolute top-0 right-0 flex size-8 items-center justify-center rounded-full bg-[#ff97a0] text-[20px] text-[#1c1c1c]">9+</span>
        </span>
        <span className="pt-2 leading-8">28°C<br /><span className="text-[#c9cacb]">Mostly cloudy</span></span>
      </button>
      <div className="flex items-center">
        <button aria-label="Start" className="flex size-[88px] items-center justify-center"><WindowsLogo /></button>
        <label className="mr-1 ml-1.5 flex h-16 w-[440px] items-center rounded-full border-2 border-[#5b5957] bg-[#413e3d] px-[21px]">
          <Search className="size-9 text-[#e3e4e6]" strokeWidth={2.300} />
          <input placeholder="Search" aria-label="Search" className="ml-4 min-w-0 flex-1 bg-transparent text-[25px] outline-none placeholder:text-[#c9c8c7]" />
          <Puffin />
        </label>
        {apps.map((a) => (
          <button key={a.name} aria-label={a.name} className="flex size-[88px] items-center justify-center">
            <span className={a.state === "active" ? "relative flex size-20 items-center justify-center rounded-lg border-2 border-[#3d3937] bg-[#322e2d]" : "relative flex size-20 items-center justify-center"}>
              {a.icon}
              {a.state === "open" && <span className="absolute bottom-0.5 h-1.5 w-3 rounded-full bg-[#9a9897]" />}
              {a.state === "active" && <span className="absolute bottom-0 h-1.5 w-8 rounded-full bg-[#4cc2ff]" />}
            </span>
          </button>
        ))}
      </div>
      <div className="flex items-center justify-end pr-[39px]">
        <button aria-label="Hidden icons"><Line className="size-8" d="M4.500 18.500L14 9l9.500 9.500" /></button>
        <svg viewBox="0 0 32 32" className="ml-8 size-8" aria-hidden="true">
          <circle cx="16" cy="12" r="8.500" fill="#6a6b6c" /><circle cx="8" cy="19" r="8" fill="#8d8e8f" /><circle cx="24" cy="19" r="8" fill="#a9aaab" /><path d="M8 27h16v-8H5z" fill="#b5b6b7" />
          <path d="M4 2l25 28" stroke="#fff" strokeWidth="2.500" />
        </svg>
        <button className="ml-[37px] pb-0.5 text-center leading-8">ENG<br />IN</button>
        <button aria-label="Network, sound and battery" className="ml-9 flex gap-4">
          <svg viewBox="0 0 32 32" className="size-8" fill="none" stroke="#fff" strokeWidth="2.300" strokeLinecap="round" aria-hidden="true"><path d="M1.500 11.500c8-8.500 21-8.500 29 0M6 16.500c5.500-6 14.500-6 20 0M10.500 21.500c3-3.500 8-3.500 11 0" /><circle cx="16" cy="26" r="2.300" fill="#fff" /></svg>
          <svg viewBox="0 0 32 32" className="size-8" fill="none" stroke="#fff" strokeWidth="2.200" strokeLinecap="round" strokeLinejoin="round" aria-hidden="true"><path d="M1.500 11.500h5l6-6.500v22l-6-6.500h-5zM17 12c1.500 2.500 1.500 5.500 0 8M21.500 8.500c3.500 4.500 3.500 10.500 0 15M26 4.500c6 7 6 16 0 23" /></svg>
          <svg viewBox="0 0 32 32" className="size-8" aria-hidden="true"><path d="M15 7h9a4 4 0 0 1 4 4v10a4 4 0 0 1-4 4H3" fill="none" stroke="#fff" strokeWidth="2.200" strokeLinecap="round" transform="translate(-.5 1)" /><path d="M28.500 14h3v6h-3z" fill="#fff" /><path d="M9 0c5 6 7 13 1 18-2 1.500-5 2-6 4l-2 2c0-3-3-5-2-10C1 8 6 5 9 0z" fill="#fff" /><path d="M9 8c0 5-2 9-5 12" stroke="#222" strokeWidth="1.300" fill="none" /></svg>
        </button>
        <button className="ml-[33px] pb-0.5 text-right leading-8">02:13<br />28/08/2025</button>
      </div>
    </footer>
  );
}

export default function App() {
  return (
    <div className="flex h-screen flex-col overflow-hidden bg-[#191b1a] font-['Noto_Sans','Open_Sans',sans-serif]">
      <TabStrip />
      <div className="mx-2 mb-2 flex min-h-0 flex-1 flex-col overflow-hidden rounded-[20px] border-2 border-[#3a3d3d] bg-[#1f2121]">
        <Toolbar />
        <Bookmarks />
        <div className="flex min-h-0 flex-1 font-['Noto_Sans_CJK_SC',sans-serif]">
          <Sidebar />
          <AppMain />
        </div>
      </div>
      <Taskbar />
    </div>
  );
}
